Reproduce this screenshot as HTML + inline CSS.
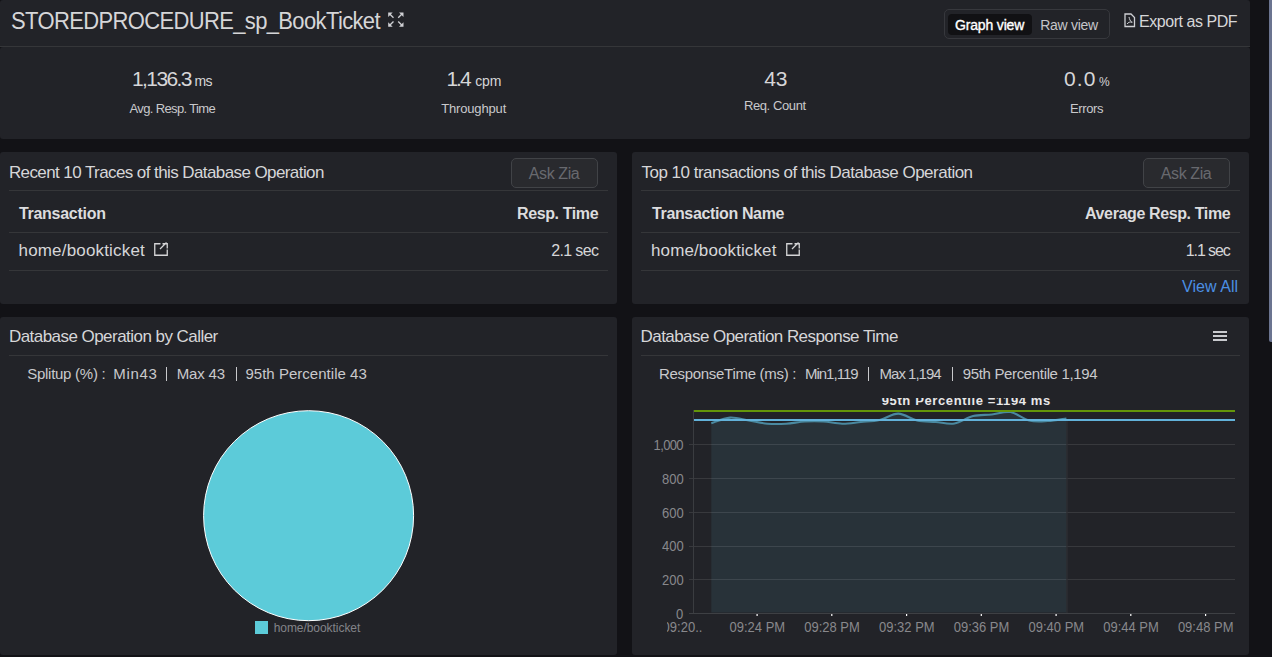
<!DOCTYPE html>
<html><head><meta charset="utf-8">
<style>
html,body{margin:0;padding:0;}
body{width:1272px;height:657px;overflow:hidden;background:#121216;position:relative;font-family:"Liberation Sans",sans-serif;}
.p{position:absolute;background:#222328;}
.t{position:absolute;white-space:pre;line-height:1;font-family:"Liberation Sans",sans-serif;}
.cl{position:absolute;overflow:hidden;}
svg{position:absolute;left:0;top:0;}
</style></head><body>
<!-- panels -->
<div class="p" style="left:0;top:0;width:1250px;height:47px;border-radius:3px 3px 0 0;"></div>
<div class="p" style="left:0;top:47px;width:1250px;height:92px;border-radius:3px;"></div>
<div class="p" style="left:0;top:152px;width:617px;height:152px;border-radius:3px;"></div>
<div class="p" style="left:632px;top:152px;width:617px;height:152px;border-radius:3px;"></div>
<div class="p" style="left:0;top:317px;width:617px;height:338px;border-radius:3px;"></div>
<div class="p" style="left:632px;top:317px;width:617px;height:338px;border-radius:3px;"></div>
<!-- scrollbar -->
<div style="position:absolute;left:1269px;top:0;width:3px;height:342px;background:#6b7490;border-radius:0 0 0 2px;"></div>
<!-- toggle -->
<div style="position:absolute;left:944px;top:9px;width:164px;height:28px;border:1px solid #37383d;border-radius:5px;"></div>
<div style="position:absolute;left:948px;top:14px;width:84px;height:21px;background:#111114;border-radius:4px;"></div>
<!-- ask zia -->
<div style="position:absolute;left:511px;top:158px;width:85px;height:28px;border:1px solid #414347;background:#292a2e;border-radius:5px;"></div>
<div style="position:absolute;left:1143px;top:158px;width:85px;height:28px;border:1px solid #414347;background:#292a2e;border-radius:5px;"></div>

<svg width="1272" height="657" viewBox="0 0 1272 657">
 <g fill="#353639">
  <rect x="0" y="46" width="1250" height="1"/>
  <rect x="9" y="190" width="599" height="1"/>
  <rect x="9" y="232" width="599" height="1"/>
  <rect x="9" y="270" width="599" height="1"/>
  <rect x="641" y="190" width="599" height="1"/>
  <rect x="641" y="232" width="599" height="1"/>
  <rect x="641" y="270" width="599" height="1"/>
  <rect x="9" y="355" width="599" height="1"/>
  <rect x="641" y="355" width="599" height="1"/>
 </g>
 <!-- expand icon -->
 <g transform="translate(388.2,12.5)" fill="#cfd0d4" stroke="#cfd0d4" stroke-width="1.3">
  <path d="M0,0 H4.5 L0,4.5 Z" stroke="none"/><path d="M1,1 L5.3,5.3"/>
  <path d="M15.3,0 H10.8 L15.3,4.5 Z" stroke="none"/><path d="M14.3,1 L10,5.3"/>
  <path d="M0,14.3 H4.5 L0,9.8 Z" stroke="none"/><path d="M1,13.3 L5.3,9"/>
  <path d="M15.3,14.3 H10.8 L15.3,9.8 Z" stroke="none"/><path d="M14.3,13.3 L10,9"/>
 </g>
 <!-- pdf icon -->
 <g transform="translate(1124,13)" fill="none" stroke="#cfd0d4" stroke-width="1.3">
  <path d="M1,1 H7 L10.5,4.5 V13.5 H1 Z"/>
  <path d="M5,4 C5.5,6 6,8 8,9.5 M3,11 C4,9.5 6,8.5 8.5,9.2" stroke-width="1"/>
 </g>
 <!-- external link icons -->
 <g fill="none" stroke="#d4d4d6" stroke-width="1.3">
  <path d="M160.5,243.75 H154.75 V255.25 H167.25 V249.5"/>
  <path d="M160,249 L166.5,242.5 M162.5,243.75 H167.25 V248.5"/>
  <path d="M792.5,243.75 H786.75 V255.25 H799.25 V249.5"/>
  <path d="M792,249 L798.5,242.5 M794.5,243.75 H799.25 V248.5"/>
 </g>
 <!-- hamburger -->
 <g fill="#c8c9cd">
  <rect x="1213" y="331" width="14" height="2"/>
  <rect x="1213" y="335" width="14" height="2"/>
  <rect x="1213" y="339" width="14" height="2"/>
 </g>
 <!-- pie -->
 <circle cx="308.6" cy="515.7" r="105" fill="#5ccbd9" stroke="#ffffff" stroke-width="1"/>
 <rect x="255" y="621" width="13" height="13" fill="#5ccbd9"/>
 <!-- chart -->
 <path d="M711.3,423.2 C714.4,422.3 723.8,418.1 730.0,417.6 C736.2,417.2 742.5,419.5 748.7,420.5 C754.9,421.5 761.2,423.2 767.4,423.7 C773.6,424.2 779.9,424.1 786.1,423.7 C792.3,423.3 798.6,421.9 804.8,421.5 C811.0,421.1 817.3,421.1 823.5,421.5 C829.7,421.9 836.0,423.6 842.2,423.7 C848.4,423.8 854.7,422.6 860.9,422.0 C867.1,421.4 873.4,421.4 879.6,420.0 C885.8,418.6 892.1,413.5 898.3,413.6 C904.5,413.7 910.8,419.1 917.0,420.5 C923.2,421.9 929.5,421.5 935.7,422.0 C941.9,422.5 948.2,424.5 954.4,423.5 C960.6,422.5 966.9,417.5 973.1,416.0 C979.3,414.5 985.6,415.2 991.8,414.5 C998.0,413.8 1004.3,411.0 1010.5,412.0 C1016.7,413.0 1023.0,419.0 1029.2,420.5 C1035.4,422.0 1041.7,421.3 1047.9,421.0 C1054.1,420.7 1063.3,418.9 1066.4,418.5 L1066.4,612.5 L711.3,612.5 Z" fill="#283239"/>
 <g fill="#ffffff" fill-opacity="0.1">
  <rect x="689" y="444" width="546" height="1"/>
  <rect x="689" y="478" width="546" height="1"/>
  <rect x="689" y="512" width="546" height="1"/>
  <rect x="689" y="546" width="546" height="1"/>
  <rect x="689" y="579" width="546" height="1"/>
 </g>
 <rect x="1066.4" y="419" width="1.2" height="194" fill="#2f3135"/>
 <rect x="693" y="410" width="1" height="203" fill="#3a3c40"/>
 <rect x="689" y="613" width="546" height="1" fill="#3e4044"/>
 <path d="M711.3,423.2 C714.4,422.3 723.8,418.1 730.0,417.6 C736.2,417.2 742.5,419.5 748.7,420.5 C754.9,421.5 761.2,423.2 767.4,423.7 C773.6,424.2 779.9,424.1 786.1,423.7 C792.3,423.3 798.6,421.9 804.8,421.5 C811.0,421.1 817.3,421.1 823.5,421.5 C829.7,421.9 836.0,423.6 842.2,423.7 C848.4,423.8 854.7,422.6 860.9,422.0 C867.1,421.4 873.4,421.4 879.6,420.0 C885.8,418.6 892.1,413.5 898.3,413.6 C904.5,413.7 910.8,419.1 917.0,420.5 C923.2,421.9 929.5,421.5 935.7,422.0 C941.9,422.5 948.2,424.5 954.4,423.5 C960.6,422.5 966.9,417.5 973.1,416.0 C979.3,414.5 985.6,415.2 991.8,414.5 C998.0,413.8 1004.3,411.0 1010.5,412.0 C1016.7,413.0 1023.0,419.0 1029.2,420.5 C1035.4,422.0 1041.7,421.3 1047.9,421.0 C1054.1,420.7 1063.3,418.9 1066.4,418.5" fill="none" stroke="#4a89a0" stroke-width="2.1"/>
 <rect x="694" y="410" width="541" height="2" fill="#64960a"/>
 <rect x="694" y="419" width="541" height="2" fill="#62b2da"/>
 <g fill="#ffffff">
  <rect x="756.5" y="614" width="1.2" height="2"/>
  <rect x="831.2" y="614" width="1.2" height="2"/>
  <rect x="906" y="614" width="1.2" height="2"/>
  <rect x="980.7" y="614" width="1.2" height="2"/>
  <rect x="1055.5" y="614" width="1.2" height="2"/>
  <rect x="1130.2" y="614" width="1.2" height="2"/>
  <rect x="1205" y="614" width="1.2" height="2"/>
 </g>
</svg>
<div class="t" style="left:11.00px;top:11px;font-size:22px;color:#d6d6d8;letter-spacing:-0.643px;transform:scaleY(1.06);transform-origin:0 18px;">STOREDPROCEDURE_sp_BookTicket</div>
<div class="t" style="left:955.00px;top:18px;font-size:14px;color:#ffffff;letter-spacing:-0.167px;-webkit-text-stroke:0.35px #fff;">Graph view</div>
<div class="t" style="left:1040.30px;top:18px;font-size:14px;color:#c6c6ca;letter-spacing:-0.300px;">Raw view</div>
<div class="t" style="left:1139.00px;top:14px;font-size:16px;color:#d6d6d8;letter-spacing:-0.458px;">Export as PDF</div>
<div class="t" style="left:132.00px;top:68px;font-size:21px;color:#d6d6d8;letter-spacing:-1.600px;">1,136.3</div>
<div class="t" style="left:194.50px;top:74px;font-size:14px;color:#d6d6d8;letter-spacing:-0.700px;">ms</div>
<div class="t" style="left:129.50px;top:102px;font-size:13px;color:#c9c9cc;letter-spacing:-0.636px;">Avg. Resp. Time</div>
<div class="t" style="left:446.40px;top:68px;font-size:21px;color:#d6d6d8;letter-spacing:-2.000px;">1.4</div>
<div class="t" style="left:475.20px;top:74px;font-size:14px;color:#d6d6d8;letter-spacing:-0.100px;">cpm</div>
<div class="t" style="left:441.20px;top:102px;font-size:13px;color:#c9c9cc;letter-spacing:-0.156px;">Throughput</div>
<div class="t" style="left:764.20px;top:68px;font-size:21px;color:#d6d6d8;letter-spacing:-0.100px;">43</div>
<div class="t" style="left:744.00px;top:99px;font-size:13px;color:#c9c9cc;letter-spacing:-0.411px;">Req. Count</div>
<div class="t" style="left:1064.00px;top:68px;font-size:21px;color:#d6d6d8;letter-spacing:1.100px;">0.0</div>
<div class="t" style="left:1098.90px;top:76px;font-size:12px;color:#d6d6d8;letter-spacing:-0.500px;transform:scaleY(1.12);transform-origin:0 10px;">%</div>
<div class="t" style="left:1070.00px;top:102px;font-size:13px;color:#c9c9cc;letter-spacing:-0.400px;">Errors</div>
<div class="t" style="left:8.90px;top:164px;font-size:17px;color:#d6d6d8;letter-spacing:-0.588px;">Recent 10 Traces of this Database Operation</div>
<div class="t" style="left:528.80px;top:166px;font-size:16px;color:#68696e;letter-spacing:-0.400px;">Ask Zia</div>
<div class="t" style="left:18.90px;top:206px;font-size:16px;color:#dcdcde;font-weight:700;letter-spacing:-0.270px;">Transaction</div>
<div class="t" style="left:517.00px;top:206px;font-size:16px;color:#dcdcde;font-weight:700;letter-spacing:-0.389px;">Resp. Time</div>
<div class="t" style="left:18.50px;top:242px;font-size:17px;color:#d6d6d8;letter-spacing:0.179px;">home/bookticket</div>
<div class="t" style="left:551.30px;top:243px;font-size:16px;color:#d6d6d8;letter-spacing:-0.667px;">2.1 sec</div>
<div class="t" style="left:641.50px;top:164px;font-size:17px;color:#d6d6d8;letter-spacing:-0.507px;">Top 10 transactions of this Database Operation</div>
<div class="t" style="left:1160.80px;top:166px;font-size:16px;color:#68696e;letter-spacing:-0.400px;">Ask Zia</div>
<div class="t" style="left:652.00px;top:206px;font-size:16px;color:#dcdcde;font-weight:700;letter-spacing:-0.360px;">Transaction Name</div>
<div class="t" style="left:1085.00px;top:206px;font-size:16px;color:#dcdcde;font-weight:700;letter-spacing:-0.376px;">Average Resp. Time</div>
<div class="t" style="left:651.00px;top:242px;font-size:17px;color:#d6d6d8;letter-spacing:0.114px;">home/bookticket</div>
<div class="t" style="left:1185.70px;top:243px;font-size:16px;color:#d6d6d8;letter-spacing:-1.067px;">1.1 sec</div>
<div class="t" style="left:1182.00px;top:279px;font-size:16px;color:#4b8fe3;letter-spacing:0.057px;">View All</div>
<div class="t" style="left:8.90px;top:328px;font-size:17px;color:#d6d6d8;letter-spacing:-0.541px;">Database Operation by Caller</div>
<div class="t" style="left:27.20px;top:366px;font-size:15px;color:#c9c9cc;letter-spacing:-0.267px;">Splitup (%) :</div>
<div class="t" style="left:113.30px;top:366px;font-size:15px;color:#c9c9cc;letter-spacing:0.650px;">Min43</div>
<div class="t" style="left:176.70px;top:366px;font-size:15px;color:#c9c9cc;letter-spacing:-0.180px;">Max 43</div>
<div class="t" style="left:245.40px;top:366px;font-size:15px;color:#c9c9cc;letter-spacing:0.029px;">95th Percentile 43</div>
<div class="t" style="left:273.70px;top:622px;font-size:12px;color:#838388;letter-spacing:-0.057px;">home/bookticket</div>
<div class="t" style="left:640.50px;top:328px;font-size:17px;color:#d6d6d8;letter-spacing:-0.552px;">Database Operation Response Time</div>
<div class="t" style="left:658.90px;top:366px;font-size:15px;color:#c9c9cc;letter-spacing:-0.294px;">ResponseTime (ms) :</div>
<div class="t" style="left:804.90px;top:366px;font-size:15px;color:#c9c9cc;letter-spacing:-0.986px;">Min1,119</div>
<div class="t" style="left:879.60px;top:366px;font-size:15px;color:#c9c9cc;letter-spacing:-1.000px;">Max 1,194</div>
<div class="t" style="left:962.80px;top:366px;font-size:15px;color:#c9c9cc;letter-spacing:-0.350px;">95th Percentile 1,194</div>
<div class="t" style="left:653.60px;top:439px;font-size:13px;color:#88888c;letter-spacing:-0.650px;transform:scaleY(1.1);transform-origin:0 11px;">1,000</div>
<div class="t" style="left:662.00px;top:473px;font-size:13px;color:#88888c;transform:scaleY(1.1);transform-origin:0 11px;">800</div>
<div class="t" style="left:662.00px;top:507px;font-size:13px;color:#88888c;transform:scaleY(1.1);transform-origin:0 11px;">600</div>
<div class="t" style="left:662.00px;top:540px;font-size:13px;color:#88888c;transform:scaleY(1.1);transform-origin:0 11px;">400</div>
<div class="t" style="left:662.00px;top:574px;font-size:13px;color:#88888c;transform:scaleY(1.1);transform-origin:0 11px;">200</div>
<div class="t" style="left:676.00px;top:608px;font-size:13px;color:#88888c;transform:scaleY(1.1);transform-origin:0 11px;">0</div>
<div class="t" style="left:729.50px;top:621px;font-size:13px;color:#88888c;transform:scaleY(1.1);transform-origin:0 11px;">09:24 PM</div>
<div class="t" style="left:804.20px;top:621px;font-size:13px;color:#88888c;transform:scaleY(1.1);transform-origin:0 11px;">09:28 PM</div>
<div class="t" style="left:879.00px;top:621px;font-size:13px;color:#88888c;transform:scaleY(1.1);transform-origin:0 11px;">09:32 PM</div>
<div class="t" style="left:953.70px;top:621px;font-size:13px;color:#88888c;transform:scaleY(1.1);transform-origin:0 11px;">09:36 PM</div>
<div class="t" style="left:1028.50px;top:621px;font-size:13px;color:#88888c;transform:scaleY(1.1);transform-origin:0 11px;">09:40 PM</div>
<div class="t" style="left:1103.20px;top:621px;font-size:13px;color:#88888c;transform:scaleY(1.1);transform-origin:0 11px;">09:44 PM</div>
<div class="t" style="left:1177.90px;top:621px;font-size:13px;color:#88888c;transform:scaleY(1.1);transform-origin:0 11px;">09:48 PM</div>
<div class="cl" style="left:667px;top:600px;width:60px;height:40px;"><div class="t" style="left:-4.40px;top:21px;font-size:13px;color:#88888c;transform:scaleY(1.1);transform-origin:0 11px;">09:20..</div></div>
<div class="cl" style="left:860px;top:398px;width:220px;height:12px;"><div class="t" style="left:21.70px;top:-4px;font-size:13px;color:#e8e8e8;font-weight:700;letter-spacing:0.622px">95th Percentile =1194 ms</div></div>
<div style="position:absolute;left:166px;top:367px;width:1.3px;height:14px;background:#c9c9cc;"></div>
<div style="position:absolute;left:236px;top:367px;width:1.3px;height:14px;background:#c9c9cc;"></div>
<div style="position:absolute;left:868px;top:367px;width:1.3px;height:14px;background:#c9c9cc;"></div>
<div style="position:absolute;left:952px;top:367px;width:1.3px;height:14px;background:#c9c9cc;"></div>
</body></html>
